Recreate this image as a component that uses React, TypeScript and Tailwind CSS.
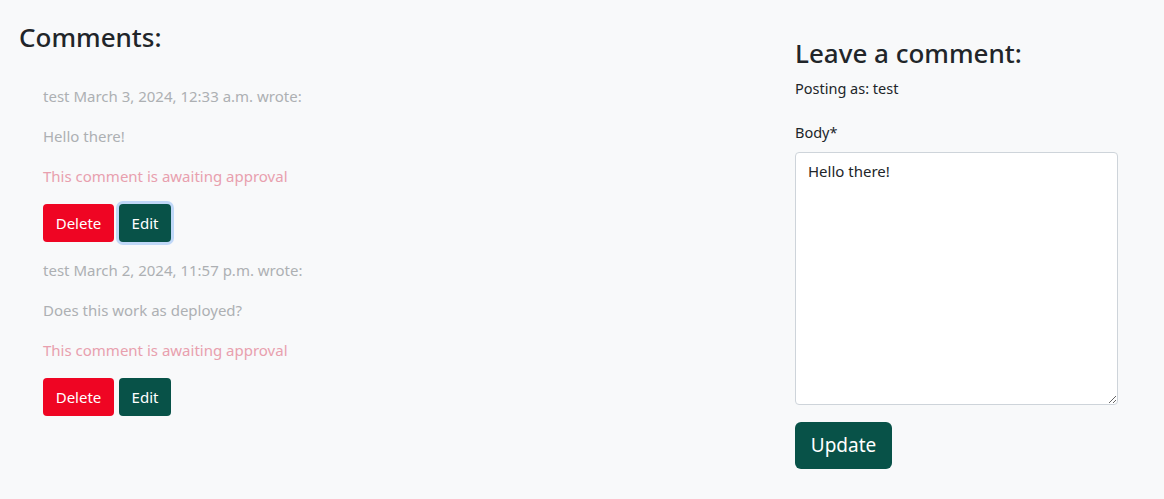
import React from "react";

const font = { fontFamily: '"Noto Sans", "Open Sans", sans-serif' };

function Comment({ meta, body, focused }: { meta: string; body: string; focused?: boolean }) {
  return (
    <div className="flex flex-col">
      <p className="text-[15px] leading-[24px] text-[#adb0b3] mb-4">{meta}</p>
      <p className="text-[15px] leading-[24px] text-[#adb0b3] mb-4">{body}</p>
      <p className="text-[15px] leading-[24px] text-[#e8a0ae] mb-4">This comment is awaiting approval</p>
      <div className="flex gap-[5px] mb-4">
        <button className="h-[38px] w-[71px] rounded-[4px] bg-[#ef0523] text-white text-[15px]">Delete</button>
        <button
          className={
            "h-[38px] w-[52px] rounded-[4px] bg-[#085248] text-white text-[15px] " +
            (focused ? "shadow-[0_0_0_3px_#c0d8f8]" : "")
          }
        >
          Edit
        </button>
      </div>
    </div>
  );
}

export default function App() {
  return (
    <div style={font} className="bg-[#f8f9fa] min-h-[499px] w-[1164px] flex text-[#212529]">
      <div className="w-[795px] pl-[19px] pt-[20px]">
        <h3 className="text-[26px] leading-[34px] font-medium">Comments:</h3>
        <div className="pl-[24px] pt-[30px]">
          <Comment meta="test March 3, 2024, 12:33 a.m. wrote:" body="Hello there!" focused />
          <Comment meta="test March 2, 2024, 11:57 p.m. wrote:" body="Does this work as deployed?" />
        </div>
      </div>
      <div className="w-[323px] pt-[36px]">
        <h3 className="text-[26px] leading-[34px] font-medium">Leave a comment:</h3>
        <p className="text-[14.5px] leading-[22px] mt-[7px]">Posting as: test</p>
        <label className="block text-[14.5px] leading-[22px] mt-[22px]">Body*</label>
        <textarea
          defaultValue="Hello there!"
          className="block mt-[9px] w-[323px] h-[253px] bg-white border border-[#ced4da] rounded-[4px] px-[12px] py-[6px] text-[15px] leading-[24px] text-[#212529] outline-none"
        />
        <button className="mt-[17px] h-[47px] w-[97px] rounded-[6px] bg-[#085248] text-white text-[19px]">Update</button>
      </div>
    </div>
  );
}
